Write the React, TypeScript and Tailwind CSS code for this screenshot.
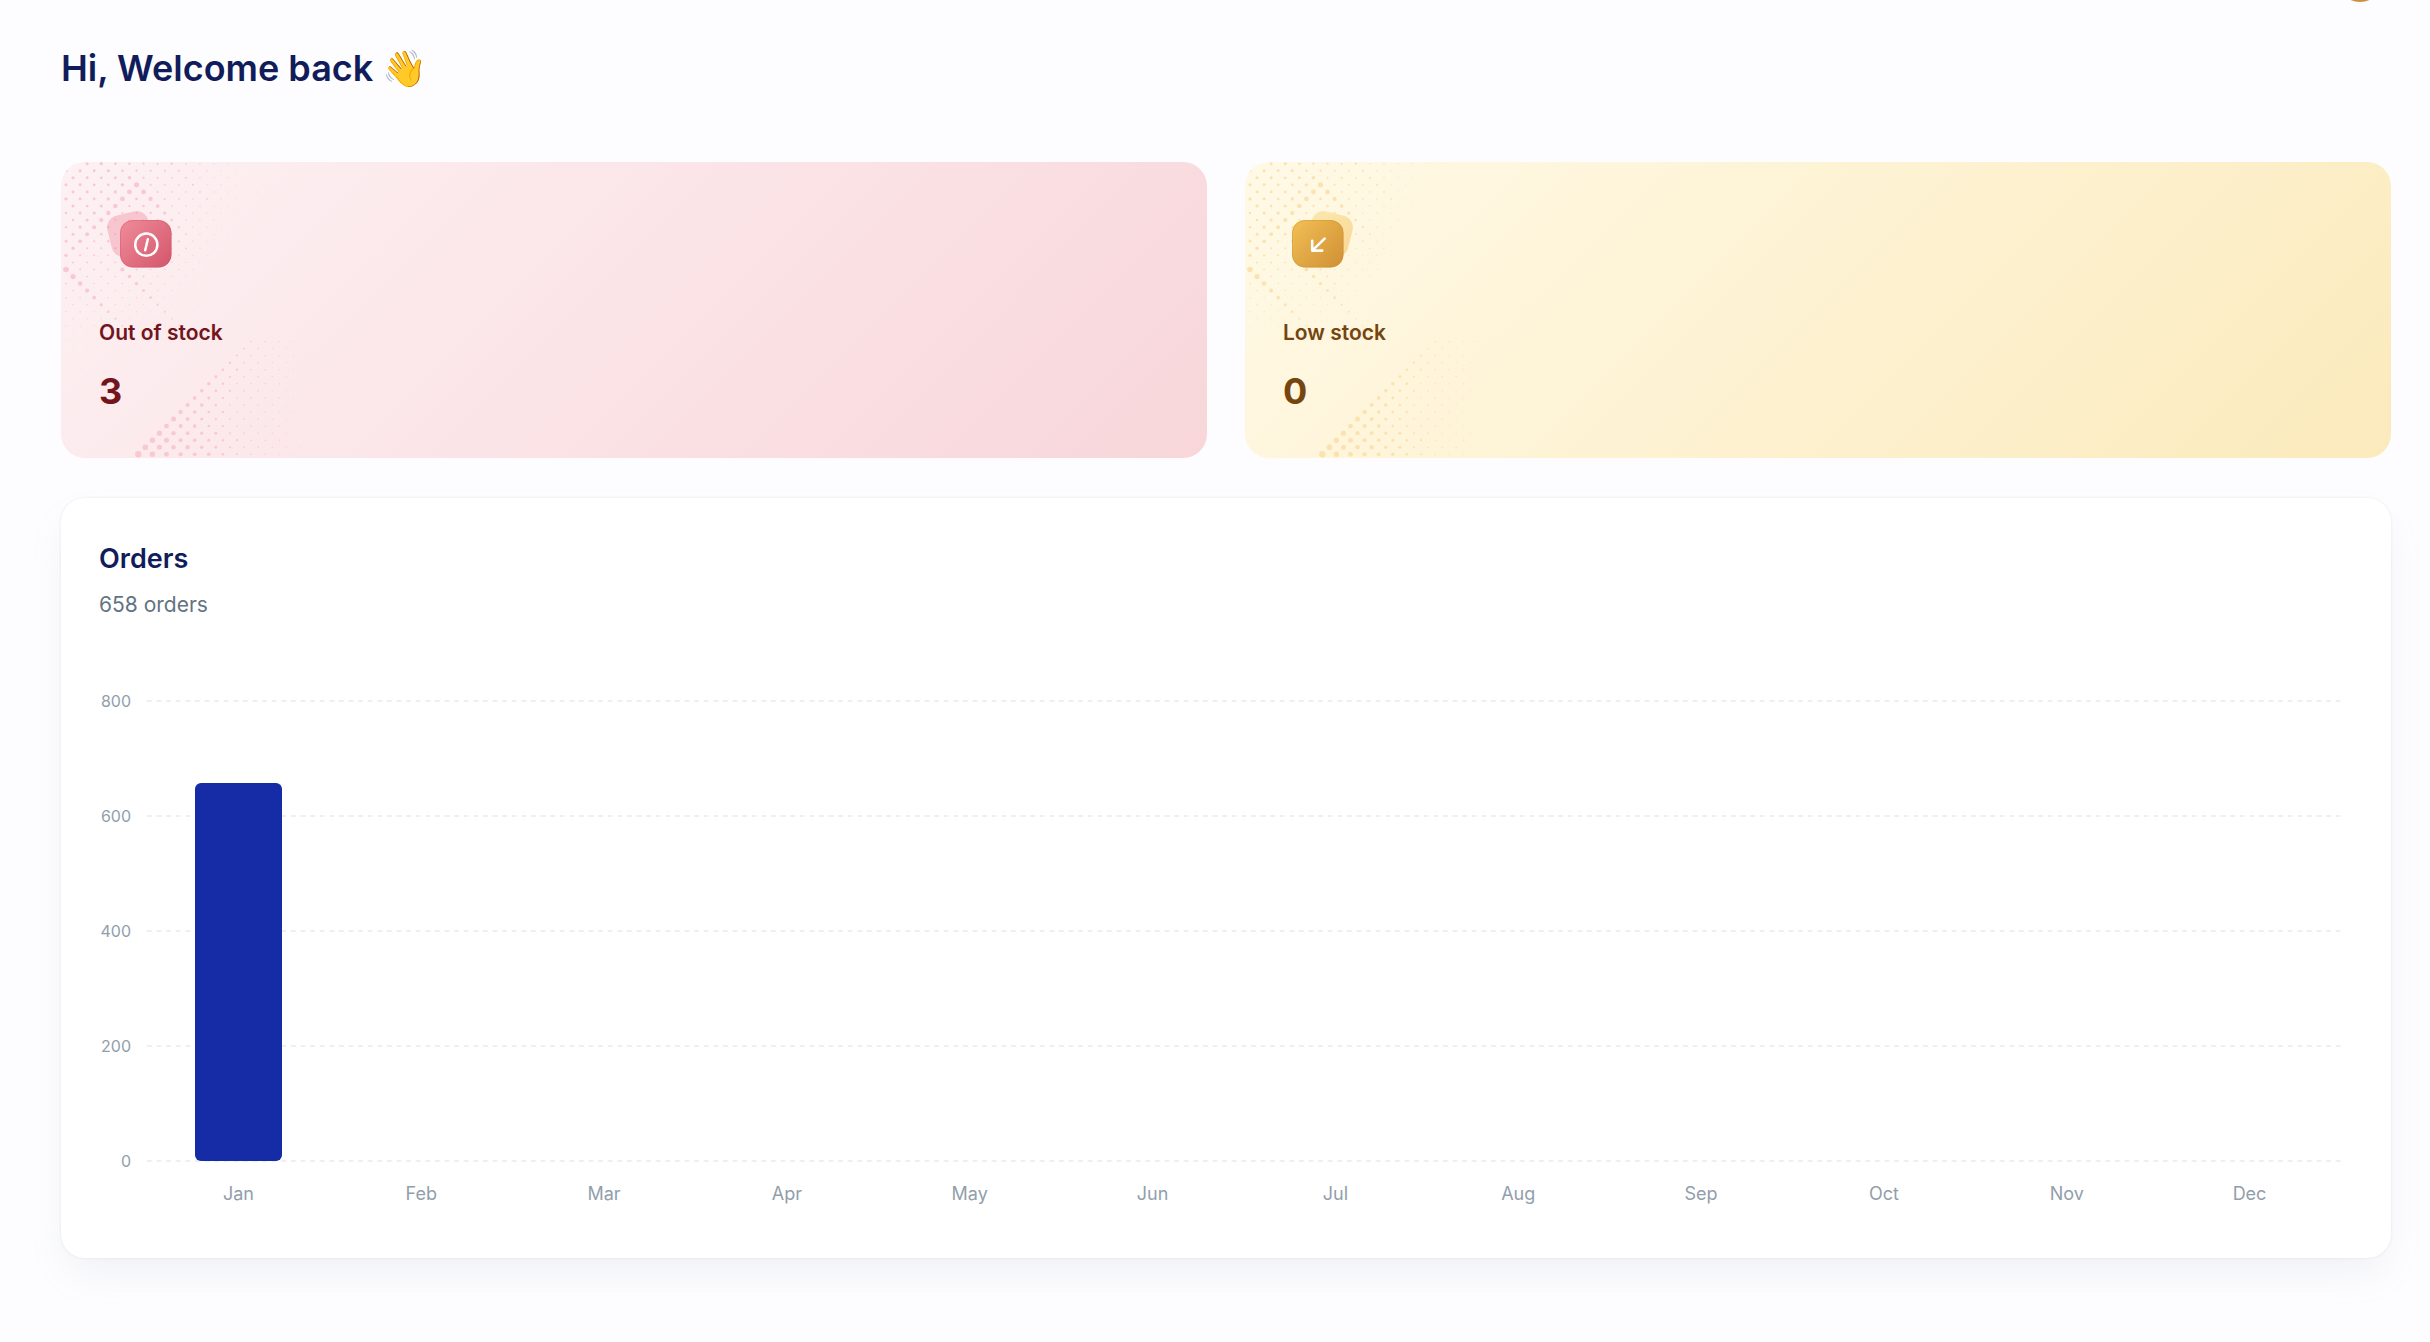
import type { ReactNode } from 'react'

interface Dot {
  x: number
  y: number
  r: number
}

interface Month {
  label: string
  orders: number
}

const months: Month[] = [
  { label: 'Jan', orders: 658 },
  { label: 'Feb', orders: 0 },
  { label: 'Mar', orders: 0 },
  { label: 'Apr', orders: 0 },
  { label: 'May', orders: 0 },
  { label: 'Jun', orders: 0 },
  { label: 'Jul', orders: 0 },
  { label: 'Aug', orders: 0 },
  { label: 'Sep', orders: 0 },
  { label: 'Oct', orders: 0 },
  { label: 'Nov', orders: 0 },
  { label: 'Dec', orders: 0 },
]

const ticks = [800, 600, 400, 200, 0]
const maxOrders = 800

// distance between neighbouring rows of the halftone
const STEP = 7.05

function cornerDots(): Dot[] {
  const dots: Dot[] = []
  for (let j = 0; j < 32; j++) {
    for (let k = 0; k < 34; k++) {
      if ((k + j) % 2 === 0) continue
      let r = 1.65 * (1 - Math.hypot(k, j) / 34)
      if ((k * 7 + j * 3) % 5 === 0 && r > 0.6) r += 0.25
      if (k + j === 13 && j >= 3) r = 2.5 - 0.08 * (j - 3)
      else if (k + j === 11 && j >= 2) r = 1.8 - 0.03 * j
      if (k - j === 7 && j >= 3) r = Math.max(r, 2.6 - 0.25 * (j - 3))
      if (j - k === 15) r = Math.max(r, 2.8 - 0.25 * k)
      if (j - k === 7 && k >= 8) r = Math.max(r, 2 - 0.18 * (k - 8))
      if (r > 0.15) dots.push({ x: 5 + k * STEP, y: 1.7 + j * STEP, r })
    }
  }
  return dots
}

function wedgeDots(): Dot[] {
  const dots: Dot[] = []
  for (let n = -1; n <= 16; n++) {
    for (let m = n; m < 30; m++) {
      if ((m + n) % 2 !== 0) continue
      let r = 3 - 0.14 * m - 0.06 * Math.min(Math.max(n, 0), m - n)
      if ((m + n * 3) % 5 === 0) r += 0.2
      if (m > 14) r = 0.9 * (1 - (m - 14) / 18)
      if (r > 0.15) dots.push({ x: 77.3 + m * STEP, y: 292.3 - n * STEP, r })
    }
  }
  return dots
}

const dots = [...cornerDots(), ...wedgeDots()]

function Halftone({ className }: { className: string }) {
  return (
    <svg aria-hidden="true" width="300" height="297" className={`absolute left-0 top-0 ${className}`}>
      {dots.map((d) => (
        <circle key={`${d.x}-${d.y}`} cx={d.x} cy={d.y} r={d.r} fill="currentColor" />
      ))}
    </svg>
  )
}

function OutOfStockIcon() {
  return (
    <svg aria-hidden="true" width="76" height="76" viewBox="0 0 76 76" fill="none">
      <defs>
        <linearGradient id="out-front" x1="21" y1="20" x2="72" y2="68" gradientUnits="userSpaceOnUse">
          <stop stopColor="#f08c9a" />
          <stop offset="1" stopColor="#d3566a" />
        </linearGradient>
      </defs>
      <rect x="10" y="13" width="42" height="42" rx="12" fill="#ee8d9e" fillOpacity="0.42" transform="rotate(-14 31 34)" />
      <rect x="21" y="20" width="51.5" height="47.5" rx="13" fill="url(#out-front)" />
      <rect x="21.5" y="20.5" width="50.5" height="46.5" rx="12.5" stroke="#d3566a" strokeOpacity="0.4" />
      <circle cx="47.3" cy="44.7" r="11.1" stroke="#fff" strokeWidth="2.5" />
      <path d="M48.8 39.3L46.2 50.2" stroke="#fff" strokeWidth="2.5" strokeLinecap="round" />
    </svg>
  )
}

function LowStockIcon() {
  return (
    <svg aria-hidden="true" width="76" height="76" viewBox="0 0 76 76" fill="none">
      <defs>
        <linearGradient id="low-front" x1="9" y1="20" x2="60" y2="68" gradientUnits="userSpaceOnUse">
          <stop stopColor="#f2c055" />
          <stop offset="1" stopColor="#cf8f35" />
        </linearGradient>
        <linearGradient id="low-back" x1="26" y1="13" x2="68" y2="55" gradientUnits="userSpaceOnUse">
          <stop stopColor="#fae5a6" />
          <stop offset="1" stopColor="#f9d088" />
        </linearGradient>
      </defs>
      <rect x="26" y="13" width="42" height="42" rx="12" fill="url(#low-back)" fillOpacity="0.85" transform="rotate(14 47 34)" />
      <rect x="9" y="20" width="51.5" height="47.5" rx="13" fill="url(#low-front)" />
      <rect x="9.5" y="20.5" width="50.5" height="46.5" rx="12.5" stroke="#cf8f35" strokeOpacity="0.4" />
      <path
        d="M41.6 38.6L29.2 50.6M29.2 40.8V50.6H39.2"
        stroke="#fff"
        strokeWidth="2.6"
        strokeLinecap="round"
        strokeLinejoin="round"
      />
    </svg>
  )
}

interface StatProps {
  title: string
  value: number
  icon: ReactNode
  className: string
  dotClass: string
}

function StatCard({ title, value, icon, className, dotClass }: StatProps) {
  return (
    <section className={`relative overflow-hidden rounded-3xl p-[38px] ${className}`}>
      <Halftone className={dotClass} />
      <div className="relative">
        {icon}
        <h2 className="mt-[38px] text-[21px] leading-[38px] font-semibold">{title}</h2>
        <p className="mt-2.5 text-4xl leading-[58px] font-bold">{value}</p>
      </div>
    </section>
  )
}

function OrdersChart() {
  return (
    <div className="mt-[78px] flex gap-4 pr-3 text-[#919eab]">
      <div className="-my-3 flex w-8 flex-none flex-col self-start text-right text-base leading-6">
        {ticks.map((t, i) => (
          <span key={t} className={i < ticks.length - 1 ? 'mb-[91px]' : ''}>
            {t}
          </span>
        ))}
      </div>

      <div className="min-w-0 flex-1">
        <div className="relative h-[460px]">
          <svg aria-hidden="true" className="absolute inset-0 h-full w-full overflow-visible">
            {ticks.map((t) => {
              const y = `${100 - (t / maxOrders) * 100}%`
              return (
                <line key={t} x1="0" x2="100%" y1={y} y2={y} stroke="#e8eaed" strokeWidth="1.6" strokeDasharray="4.8 4.8" />
              )
            })}
          </svg>
          <div className="relative flex h-full items-end">
            {months.map((m) => (
              <div key={m.label} className="flex h-full flex-1 items-end justify-center">
                <div
                  className="w-[48%] rounded-md bg-[#152ca6]"
                  style={{ height: `${(m.orders / maxOrders) * 100}%` }}
                />
              </div>
            ))}
          </div>
        </div>
        <div className="mt-[19px] flex text-lg leading-7">
          {months.map((m) => (
            <span key={m.label} className="flex-1 text-center">
              {m.label}
            </span>
          ))}
        </div>
      </div>
    </div>
  )
}

export default function App() {
  return (
    <div className="relative min-h-screen overflow-hidden bg-[#fdfdff] pt-[39px] pr-[39px] pb-20 pl-[61px] font-['Inter',sans-serif]">
      <button
        type="button"
        aria-label="Account"
        className="absolute -top-12 right-[45px] h-[50px] w-[50px] rounded-full bg-[#c9923f]"
      />

      <h1 className="mb-[65px] text-4xl leading-[58px] font-semibold text-[#111d5a]">Hi, Welcome back 👋</h1>

      <div className="grid grid-cols-2 gap-[38px]">
        <StatCard
          title="Out of stock"
          value={3}
          icon={<OutOfStockIcon />}
          className="bg-linear-135 from-[#fdf1f3] to-[#f8d6da] text-[#73151d]"
          dotClass="text-[#f8c9d0]"
        />
        <StatCard
          title="Low stock"
          value={0}
          icon={<LowStockIcon />}
          className="bg-linear-135 from-[#fff9e6] to-[#fbeabc] text-[#75450f]"
          dotClass="text-[#fbe3b1]"
        />
      </div>

      <section className="mt-10 rounded-3xl bg-white p-[38px] pb-[50px] shadow-[0_0_3px_rgba(145,158,171,0.2),0_19px_38px_-6px_rgba(145,158,171,0.12)]">
        <h2 className="text-[27px] leading-[45px] font-semibold text-[#111d5a]">Orders</h2>
        <p className="mt-1.5 text-[21px] leading-9 text-[#637381]">658 orders</p>
        <OrdersChart />
      </section>
    </div>
  )
}
